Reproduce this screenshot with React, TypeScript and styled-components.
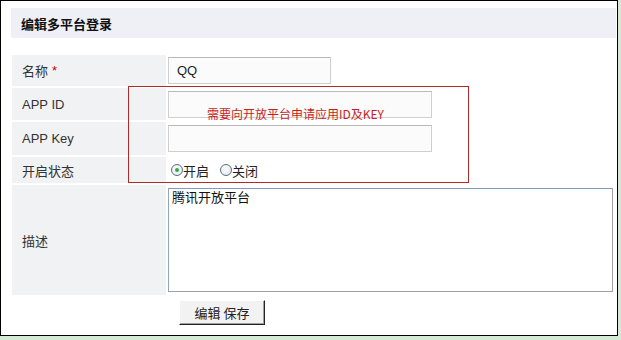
import * as React from 'react'
import styled, { createGlobalStyle } from 'styled-components'

const Global = createGlobalStyle`
  html, body {
    margin: 0;
    padding: 0;
    background: #d5ead5;
  }
  body {
    width: 621px;
    height: 340px;
    overflow: hidden;
    font-family: "Liberation Sans", "Noto Sans CJK SC", sans-serif;
  }
`

const Frame = styled.div`
  position: relative;
  box-sizing: border-box;
  width: 618px;
  height: 336px;
  border: 1px solid #000;
  background: #fff;
  padding: 7px 1px 0 10px;
`

const Header = styled.div`
  height: 30px;
  display: flex;
  align-items: center;
  padding-left: 10px;
  background: #eef0f6;
  font-size: 13px;
  font-weight: bold;
  color: #111;
  font-family: "Noto Sans CJK SC", sans-serif;
`

const Table = styled.div`
  display: grid;
  grid-template-columns: 154px 445px;
  grid-template-rows: 31px 32px 33px 26px 110px;
  row-gap: 2px;
  column-gap: 2px;
  margin: 17px 0 0 1px;
`

const Label = styled.div`
  display: flex;
  align-items: center;
  padding-left: 10px;
  background: #f1f2f4;
  font-size: 13px;
  color: #333;
`

const Star = styled.span`
  color: #c00;
  margin-left: 4px;
`

const Value = styled.div<{ $top?: boolean }>`
  display: flex;
  align-items: ${({ $top }) => ($top ? 'flex-start' : 'center')};
  padding-top: ${({ $top }) => ($top ? '3px' : '0')};
`

const Input = styled.div<{ $w: number }>`
  box-sizing: border-box;
  width: ${({ $w }) => $w}px;
  height: 27px;
  border: 1px solid #cfcfcf;
  border-top-color: #b8b8b8;
  background: #fbfbfb;
  display: flex;
  align-items: center;
  padding-left: 8px;
  font-size: 13px;
  color: #222;
`

const RadioGroup = styled.div`
  display: flex;
  align-items: center;
  padding-left: 3px;
  font-size: 13px;
  color: #222;
  font-family: "Noto Sans CJK SC", sans-serif;
`

const RadioItem = styled.label`
  display: flex;
  align-items: center;
  margin-right: 11px;
`

const Dot = styled.span<{ $on?: boolean }>`
  position: relative;
  box-sizing: border-box;
  width: 12px;
  height: 12px;
  border-radius: 50%;
  border: 1px solid #5a6f86;
  background: radial-gradient(circle at 40% 40%, #fff, #dde2e8);
  &:after {
    content: '';
    display: ${({ $on }) => ($on ? 'block' : 'none')};
    position: absolute;
    left: 3px;
    top: 3px;
    width: 4px;
    height: 4px;
    border-radius: 50%;
    background: #3fa33f;
  }
`

const TextArea = styled.div`
  box-sizing: border-box;
  width: 445px;
  height: 104px;
  border: 1px solid #a0a0a0;
  border-top-color: #7f9db9;
  border-left-color: #8fa6bb;
  padding: 0 3px;
  font-size: 13px;
  color: #111;
  font-family: "Noto Sans CJK SC", sans-serif;
  line-height: 16px;
`

const Actions = styled.div`
  padding: 5px 0 0 168px;
`

const Button = styled.button`
  box-sizing: border-box;
  width: 86px;
  height: 25px;
  background: #f2f2f2;
  border: 1px solid #fff;
  border-right-color: #222;
  border-bottom-color: #222;
  box-shadow: inset -1px -1px 0 #a0a0a0;
  font-size: 13px;
  color: #222;
  font-family: "Noto Sans CJK SC", sans-serif;
  padding: 0;
`

const Notice = styled.div`
  position: absolute;
  left: 127px;
  top: 85px;
  width: 341px;
  height: 97px;
  box-sizing: border-box;
  border: 1px solid #b02a2a;
  font-size: 12px;
  color: #c81e1e;
  font-family: "Noto Sans CJK SC", sans-serif;
  padding: 19px 0 0 78px;
  line-height: 16px;
`

const rows = [
  { label: '名称', required: true, value: 'QQ', width: 163 },
  { label: 'APP ID', value: '', width: 264 },
  { label: 'APP Key', value: '', width: 264 },
]

export default function App() {
  return (
    <>
      <Global />
      <Frame>
        <Header>编辑多平台登录</Header>
        <Table>
          {rows.map(r => (
            <React.Fragment key={r.label}>
              <Label>
                {r.label}
                {r.required && <Star>*</Star>}
              </Label>
              <Value>
                <Input $w={r.width}>{r.value}</Input>
              </Value>
            </React.Fragment>
          ))}
          <Label>开启状态</Label>
          <Value>
            <RadioGroup>
              <RadioItem>
                <Dot $on />
                开启
              </RadioItem>
              <RadioItem>
                <Dot />
                关闭
              </RadioItem>
            </RadioGroup>
          </Value>
          <Label>描述</Label>
          <Value $top>
            <TextArea>腾讯开放平台</TextArea>
          </Value>
        </Table>
        <Actions>
          <Button>编辑 保存</Button>
        </Actions>
        <Notice>需要向开放平台申请应用ID及KEY</Notice>
      </Frame>
    </>
  )
}
